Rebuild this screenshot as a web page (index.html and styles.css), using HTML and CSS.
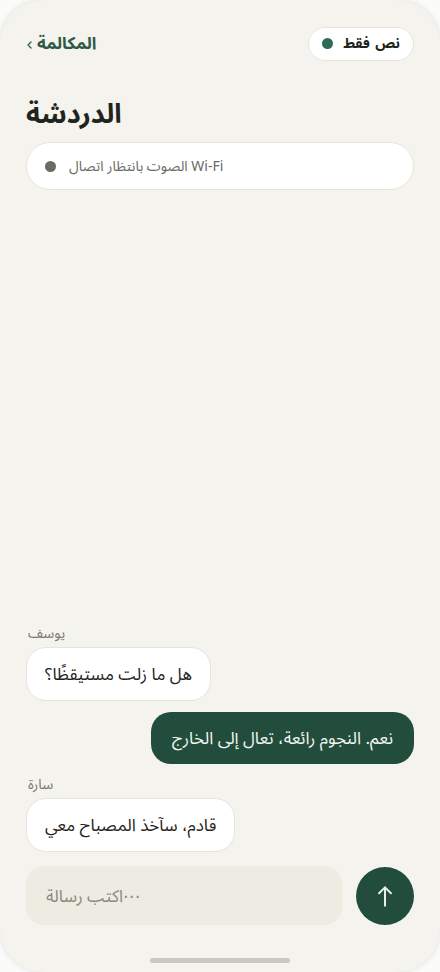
FILE: index.html
```html
<!DOCTYPE html>
<html lang="ar">
<head>
<meta charset="utf-8">
<title>الدردشة</title>
<link rel="stylesheet" href="styles.css">
</head>
<body>
<div class="phone">
  <header class="topbar">
    <a class="back" href="#"><svg class="chev" width="5" height="8" viewBox="0 0 5 8" fill="none" stroke="#2f5a47" stroke-width="1.3" stroke-linecap="round" stroke-linejoin="round"><path d="M4 1L1 4l3 3"/></svg><span class="back-text">المكالمة</span></a>
    <div class="mode-pill"><span class="dot dot-green"></span><span class="mode-text">نص فقط</span></div>
  </header>
  <h1 class="title">الدردشة</h1>
  <div class="status"><span class="dot dot-gray"></span><span class="status-text">الصوت بانتظار اتصال Wi-Fi</span></div>

  <main class="messages">
    <div class="msg incoming">
      <div class="name">يوسف</div>
      <div class="bubble">هل ما زلت مستيقظًا؟</div>
    </div>
    <div class="msg outgoing">
      <div class="bubble">نعم. النجوم رائعة، تعال إلى الخارج</div>
    </div>
    <div class="msg incoming">
      <div class="name">سارة</div>
      <div class="bubble">قادم، سآخذ المصباح معي</div>
    </div>
  </main>

  <div class="composer">
    <input class="input" type="text" dir="ltr" placeholder="اكتب رسالة⋯">
    <button class="send" aria-label="إرسال">
      <svg width="26" height="26" viewBox="0 0 24 24" fill="none" stroke="#e8efe9" stroke-width="1.8" stroke-linecap="round" stroke-linejoin="round"><path d="M12 21V4M6.5 9.5L12 4l5.5 5.5"/></svg>
    </button>
  </div>
  <div class="home-indicator"></div>
</div>
</body>
</html>
```
FILE: styles.css
```css
* { box-sizing: border-box; }
html, body { margin: 0; padding: 0; }
body {
  background: #fbfbfa;
  font-family: "Noto Sans", "Noto Sans Arabic", "DejaVu Sans", sans-serif;
  color: #1f2420;
}
.phone {
  width: 440px;
  height: 972px;
  background: #f4f3ee;
  border-radius: 44px;
  box-shadow: 0 0 6px rgba(0,0,0,0.12);
  display: flex;
  flex-direction: column;
  padding: 26px 26px 9px;
  overflow: hidden;
}
.topbar {
  display: flex;
  justify-content: space-between;
  align-items: center;
  height: 35px;
}
.back {
  display: flex;
  align-items: center;
  gap: 5px;
  color: #2f5a47;
  font-weight: 700;
  font-size: 17px;
  text-decoration: none;
}
.chev {
  display: block;
  margin-left: 1px;
  margin-top: 2px;
}
.mode-pill {
  display: flex;
  align-items: center;
  gap: 10px;
  height: 34px;
  padding: 0 13px 0 13px;
  background: #ffffff;
  border: 1px solid #e6e4db;
  border-radius: 17px;
}
.mode-text {
  font-size: 14px;
  font-weight: 700;
  word-spacing: 2px;
  color: #1f2420;
}
.dot {
  width: 11px;
  height: 11px;
  border-radius: 50%;
  display: inline-block;
  flex: none;
}
.dot-green { background: #2e6b52; }
.dot-gray { background: #6b6a64; }
.title {
  margin: 34px 0 11px;
  font-size: 27px;
  font-weight: 700;
  line-height: 36px;
  color: #1f2420;
}
.status {
  display: flex;
  align-items: center;
  gap: 13px;
  height: 48px;
  padding: 0 18px;
  background: #ffffff;
  border: 1px solid #e6e4db;
  border-radius: 24px;
}
.status-text {
  font-size: 14px;
  color: #6b6a64;
}
.messages {
  flex: 1;
  display: flex;
  flex-direction: column;
  justify-content: flex-end;
  gap: 11px;
}
.msg {
  display: flex;
  flex-direction: column;
}
.incoming { align-items: flex-start; }
.outgoing { align-items: flex-end; }
.name {
  font-size: 14px;
  color: #7a7973;
  line-height: 18px;
  margin: 0 0 5px 2px;
}
.bubble {
  font-size: 17px;
  line-height: 26px;
  padding: 13px 18px;
  border-radius: 20px;
}
.incoming .bubble {
  background: #ffffff;
  border: 1px solid #e6e4db;
  color: #1f2420;
}
.outgoing .bubble {
  background: #224d3c;
  color: #f4f6f2;
  padding: 13px 21px;
}
.composer {
  display: flex;
  align-items: center;
  gap: 14px;
  margin-top: 14px;
}
.input {
  flex: 1;
  height: 59px;
  border: none;
  outline: none;
  background: #edebe2;
  border-radius: 18px;
  padding: 0 20px;
  font-family: inherit;
  font-size: 17px;
  color: #1f2420;
  text-align: left;
}
.input::placeholder { color: #8a8980; }
.send {
  width: 58px;
  height: 58px;
  border-radius: 50%;
  border: none;
  background: #224d3c;
  display: flex;
  align-items: center;
  justify-content: center;
  padding: 0;
  flex: none;
}
.home-indicator {
  align-self: center;
  width: 140px;
  height: 5px;
  border-radius: 3px;
  background: #c8c7c1;
  margin-top: 33px;
}
```
